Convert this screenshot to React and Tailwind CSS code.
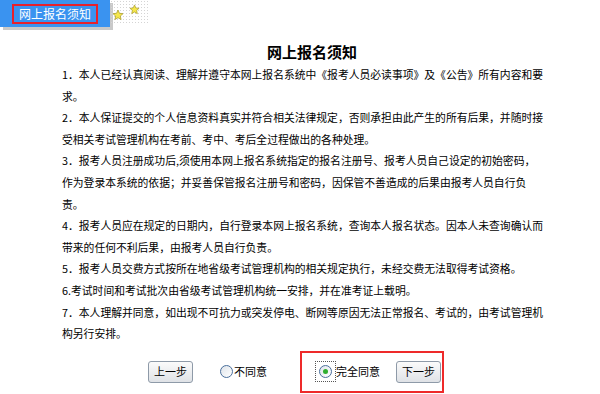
import React from 'react';

const font = { fontFamily: '"SimSun", "Noto Sans CJK SC", "Liberation Sans", sans-serif' };

// each notice item is split into the lines as they wrap on the page
const notices = [
    ['1．本人已经认真阅读、理解并遵守本网上报名系统中《报考人员必读事项》及《公告》所有内容和要', '求。'],
    ['2．本人保证提交的个人信息资料真实并符合相关法律规定，否则承担由此产生的所有后果，并随时接', '受相关考试管理机构在考前、考中、考后全过程做出的各种处理。'],
    ['3．报考人员注册成功后,须使用本网上报名系统指定的报名注册号、报考人员自己设定的初始密码，', '作为登录本系统的依据；并妥善保管报名注册号和密码，因保管不善造成的后果由报考人员自行负', '责。'],
    ['4．报考人员应在规定的日期内，自行登录本网上报名系统，查询本人报名状态。因本人未查询确认而', '带来的任何不利后果，由报考人员自行负责。'],
    ['5．报考人员交费方式按所在地省级考试管理机构的相关规定执行，未经交费无法取得考试资格。'],
    ['6.考试时间和考试批次由省级考试管理机构统一安排，并在准考证上载明。'],
    ['7．本人理解并同意，如出现不可抗力或突发停电、断网等原因无法正常报名、考试的，由考试管理机', '构另行安排。'],
];

const Star = ({ className }) => (
    <svg viewBox="0 0 24 24" className={className}>
        <path
            d="M12 2l2.9 6.6 7.1.7-5.4 4.8 1.6 7-6.2-3.7-6.2 3.7 1.6-7L2 9.3l7.1-.7z"
            fill="#f5e74a"
            stroke="#a89a2a"
            strokeWidth="1.5"
            strokeLinejoin="round"
        />
    </svg>
);

const Radio = ({ checked }) => (
    <span className="w-[13px] h-[13px] shrink-0 rounded-full border border-[#4a6f9c] bg-gradient-to-br from-[#dfe4ea] to-white flex items-center justify-center">
        {checked && <span className="w-[5px] h-[5px] rounded-full bg-[#2fae2f]" />}
    </span>
);

const Button = ({ children }) => (
    <button className="h-[22px] w-[45px] rounded-[3px] border border-[#8e9aa8] bg-gradient-to-b from-[#fbfbfb] to-[#dfe2e6] text-[11px] text-black leading-none whitespace-nowrap">
        {children}
    </button>
);

export default function App() {
    return (
        <div className="w-[600px] h-[394px] bg-white overflow-hidden text-black" style={font}>
            {/* Tab header */}
            <div className="flex items-start h-[30px]">
                <div className="relative">
                    <div className="w-[110px] h-[27px] bg-[#3a93f0] flex items-center pl-[12px] shadow-[3px_3px_0_#c9c9c9]">
                        <div className="w-[86px] h-[20px] border-2 border-[#e8202a] flex items-center justify-center text-white text-[12px]">
                            网上报名须知
                        </div>
                    </div>
                </div>
                <div className="relative w-[38px] h-[25px] bg-[radial-gradient(#d4d4d4_0.8px,transparent_0.9px)] bg-[length:3px_3px]">
                    <Star className="absolute left-[2px] top-[9px] w-[12px] h-[12px]" />
                    <Star className="absolute left-[19px] top-[4px] w-[11px] h-[11px]" />
                </div>
            </div>

            {/* Title */}
            <h1 className="mt-[12px] text-center text-[15px] font-bold leading-[20px] pl-[24px]">网上报名须知</h1>

            {/* Notice items */}
            <div className="mt-[2px] ml-[62px] text-[10.8px] leading-[21.6px]">
                {notices.map((lines, i) => (
                    <div key={i}>
                        {lines.map((line, j) => (
                            <div key={j} className="whitespace-nowrap">{line}</div>
                        ))}
                    </div>
                ))}
            </div>

            {/* Actions */}
            <div className="mt-[6px] flex items-center text-[11px] whitespace-nowrap">
                <div className="ml-[148px]">
                    <Button>上一步</Button>
                </div>
                <label className="ml-[27px] flex items-center gap-[1px]">
                    <Radio />
                    <span>不同意</span>
                </label>
                <div className="ml-[33px] w-[144px] h-[42px] border-2 border-[#ee2a2a] flex items-center pl-[13px]">
                    <label className="flex items-center">
                        <span className="p-[3px] border border-dotted border-[#555] flex">
                            <Radio checked />
                        </span>
                        <span>完全同意</span>
                    </label>
                    <div className="ml-[16px]">
                        <Button>下一步</Button>
                    </div>
                </div>
            </div>
        </div>
    );
}
